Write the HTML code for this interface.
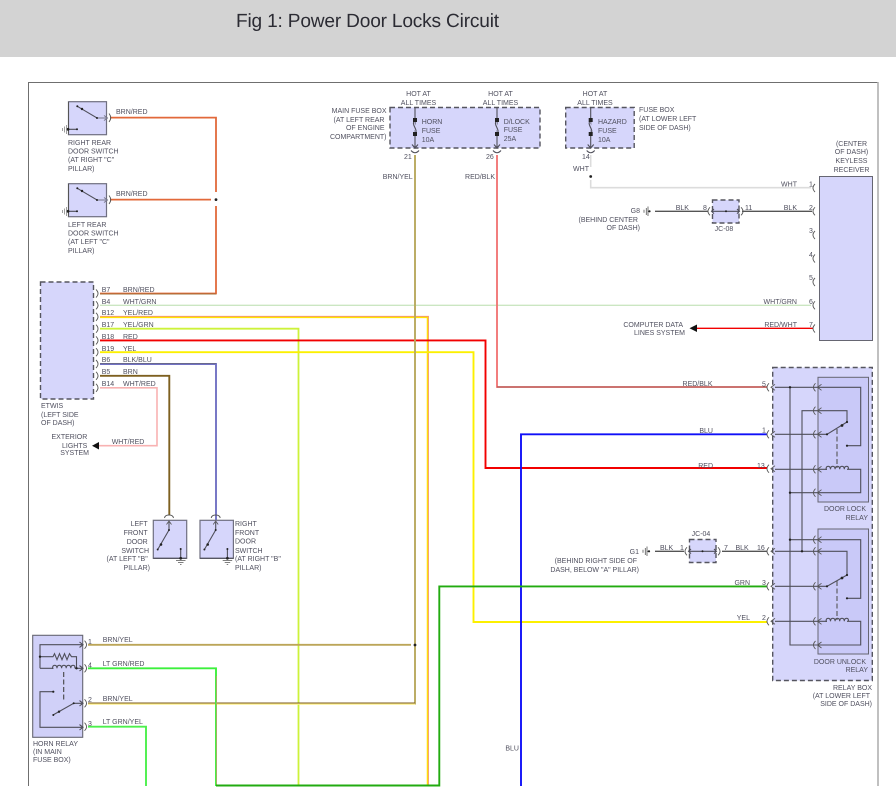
<!DOCTYPE html>
<html><head><meta charset="utf-8"><title>Fig 1: Power Door Locks Circuit</title>
<style>
html,body{margin:0;padding:0;background:#fff;width:896px;height:810px;overflow:hidden}
#h{position:absolute;left:0;top:0;width:896px;height:57px;background:#d3d3d3}
#h h1{position:absolute;left:236px;top:10px;margin:0;font:400 19.1px/24px "Liberation Sans",sans-serif;color:#2b2b33;white-space:nowrap;text-rendering:geometricPrecision;letter-spacing:-.18px}
svg{position:absolute;left:0;top:0}
text{font:7px "Liberation Sans",sans-serif;fill:#50505f}
.e{text-anchor:end}.m{text-anchor:middle}
.w{fill:none;stroke-linejoin:miter}
.k{fill:none;stroke:#4f4f5a;stroke-width:1.1}
.d{fill:#d6d6fb;stroke:#55555f;stroke-width:1.4;stroke-dasharray:5 3}
.s{fill:#d6d6fb;stroke:#6f6f80;stroke-width:1.2}
.i{fill:#c9c9f8;stroke:#666672;stroke-width:1}
.t{fill:#222}
</style></head><body>
<div id="h"><h1>Fig 1: Power Door Locks Circuit</h1></div>
<svg width="896" height="810" viewBox="0 0 896 810" xmlns="http://www.w3.org/2000/svg">
<defs>
<g id="cr"><path d="M-1,-4Q3,0-1,4" fill="none" stroke="#555" stroke-width=".9"/><path d="M-7,-3L-3,0L-7,3" fill="none" stroke="#555" stroke-width=".9"/></g>
<g id="cl"><path d="M1,-4Q-3,0 1,4" fill="none" stroke="#555" stroke-width=".9"/><path d="M7,-3L3,0L7,3" fill="none" stroke="#555" stroke-width=".9"/></g>
<g id="cn"><path d="M-1,-4Q3,0-1,4" fill="none" stroke="#555" stroke-width=".9"/></g>
<g id="cm"><path d="M1,-4Q-3,0 1,4" fill="none" stroke="#555" stroke-width=".9"/></g>
<g id="rsw">
<rect x="68.5" y="101.7" width="38" height="33" class="s"/>
<path d="M68.5,102V134.5" stroke="#555" fill="none"/>
<path d="M77.3,106.3L97,118H103M68,129.3H77" class="k"/>
<path d="M97,118H107M104,115.5L107.5,118L104,120.5" fill="none" stroke="#77778a"/>
<circle cx="77.3" cy="106.3" r="1" class="t"/><circle cx="82" cy="109" r="1.2" class="t"/><circle cx="97" cy="118" r="1" class="t"/><circle cx="68" cy="129.3" r="1.4" class="t"/><circle cx="77" cy="129.3" r="1" class="t"/>
<path d="M62.5,128V131M64.5,126.5V132.5M66.5,125V134" stroke="#777" stroke-width=".7" fill="none"/>
<path d="M109,113.5Q112.5,117.7 109,122" fill="none" stroke="#555" stroke-width=".9"/>
</g>
<g id="dsw">
<rect x="153.3" y="520.3" width="33.4" height="38" class="s"/>
<path d="M169,522V530L157.7,549.5M153.3,558.3H186.7M180.7,549V558" class="k"/>
<path d="M166.5,524.5L169,521L171.5,524.5" fill="none" stroke="#555" stroke-width=".8"/>
<path d="M164.5,518Q165,515 169,515T173.5,518" fill="none" stroke="#555" stroke-width=".9"/>
<circle cx="169" cy="530" r="1" class="t"/><circle cx="161" cy="544.5" r="1.3" class="t"/><circle cx="157.7" cy="549.5" r="1" class="t"/><circle cx="180.7" cy="549" r="1" class="t"/><circle cx="180.7" cy="558.3" r="1.4" class="t"/>
<path d="M176,560.5H185.5M178,562.5H183.5M180,564.5H181.5" stroke="#555" stroke-width=".8" fill="none"/>
</g>
<g id="fuse">
<path d="M0,107V148" class="k" stroke-width="1.2"/>
<path d="M0,120C-6,124 5,129 0,134" fill="none" stroke="#d6d6fb" stroke-width="3"/>
<path d="M0,120C-5,125 4,129 0,134" class="k"/>
<rect x="-2" y="118" width="4" height="4" class="t"/><rect x="-2" y="132" width="4" height="4" class="t"/>
<path d="M-3,144.5L0,148L3,144.5" class="k"/>
<path d="M-4,150.5Q0,155 4,150.5" class="k"/>
</g>
<g id="coil"><path d="M0,0H-1q0,-3 2.2,-3t2.3,3q0,-3 2.3,-3t2.3,3q0,-3 2.3,-3t2.3,3q0,-3 2.3,-3t2.3,3q0,-3 2.3,-3t1.7,3" class="k"/></g>
</defs>

<!-- frame -->
<path d="M28.5,786V82.5H878" fill="none" stroke="#6f6f6f" stroke-width="1"/>
<path d="M878,82V786" stroke="#b0b0b0" stroke-width="1.6" fill="none"/>

<!-- wires -->
<path d="M110,117.6H216V192M216,206V293.5H100M110,199.6H211" class="w" stroke="#e2693a" stroke-width="1.8"/>
<path d="M100,294H216" stroke="#8a6a30" stroke-width=".8"/>
<path d="M100,305.3H811" class="w" stroke="#cbe6c2" stroke-width="1.4"/>
<path d="M100,317.2H427.7V786" class="w" stroke="#ffe600" stroke-width="1.9"/>
<path d="M100,316.4H428.4V786" class="w" stroke="#f59a6a" stroke-width="1"/>
<path d="M100,328.7H298.5V786" class="w" stroke="#cdf23a" stroke-width="1.8"/>
<path d="M100,340.4H485.5V468H767" class="w" stroke="#f20000" stroke-width="1.9"/>
<path d="M100,352.2H473.5V622H767" class="w" stroke="#fcf000" stroke-width="1.9"/>
<path d="M100,364H216V520" class="w" stroke="#7272c4" stroke-width="1.9"/>
<path d="M100,363.6H216" stroke="#66667a" stroke-width=".8"/>
<path d="M100,375.8H169.3V515" class="w" stroke="#7e6020" stroke-width="1.9"/>
<path d="M100,387.8H157V445.7H99" class="w" stroke="#f8b2b2" stroke-width="1.6"/>
<path d="M415,155V703.5H88" class="w" stroke="#b9a95e" stroke-width="1.9"/>
<path d="M88,703.8H415" stroke="#fdf18a" stroke-width="1.8"/>
<path d="M88,703H415" stroke="#7a5a20" stroke-width="1"/>
<path d="M88,644.8H411" stroke="#bca558" stroke-width="1.9"/>
<path d="M88,668.3H216V786" class="w" stroke="#3cf03c" stroke-width="1.9"/>
<path d="M216.6,676V786" stroke="#b7a26a" stroke-width=".8"/>
<path d="M88,726.7H146V786" class="w" stroke="#4cf04c" stroke-width="1.9"/>
<path d="M497,155V387H767" class="w" stroke="#f07070" stroke-width="1.8"/>
<path d="M497,387H767" stroke="#8a4a40" stroke-width=".8"/>
<path d="M767,434.3H521V786" class="w" stroke="#1010f8" stroke-width="1.9"/>
<path d="M767,586.4H439.3V785.5H216" class="w" stroke="#22ab10" stroke-width="1.9"/>
<path d="M590.7,155V167M590.7,180V187.7H811" class="w" stroke="#dcdcdc" stroke-width="1.6"/>
<path d="M697,328.3H813" stroke="#f20000" stroke-width="1.3"/>
<path d="M655,211.3H708M742,211.3H812M655,551.3H684M722,551.3H767" stroke="#555" stroke-width="1.3" fill="none"/>
<path d="M99,442L92,445.7L99,449.5Z" fill="#111"/>
<path d="M697,324.5L689.5,328.3L697,332Z" fill="#111"/>
<circle cx="216" cy="199.6" r="1.4" class="t"/><circle cx="415" cy="645" r="1.4" class="t"/><circle cx="590.7" cy="176.5" r="1.4" class="t"/>

<!-- rear switches -->
<use href="#rsw"/><use href="#rsw" y="82"/>
<text x="116" y="114">BRN/RED</text><text x="116" y="196">BRN/RED</text>
<text x="68" y="145">RIGHT REAR</text><text x="68" y="153.5">DOOR SWITCH</text><text x="68" y="162">(AT RIGHT "C"</text><text x="68" y="171">PILLAR)</text>
<text x="68" y="227">LEFT REAR</text><text x="68" y="235.5">DOOR SWITCH</text><text x="68" y="244">(AT LEFT "C"</text><text x="68" y="253">PILLAR)</text>

<!-- fuse boxes -->
<rect x="390" y="107.5" width="150" height="40.5" class="d"/>
<rect x="565.7" y="107.5" width="68.5" height="40.5" class="d"/>
<use href="#fuse" x="415"/><use href="#fuse" x="497"/><use href="#fuse" x="590.7"/>
<text class="m" x="418.5" y="96">HOT AT</text><text class="m" x="418.5" y="105">ALL TIMES</text>
<text class="m" x="500.5" y="96">HOT AT</text><text class="m" x="500.5" y="105">ALL TIMES</text>
<text class="m" x="595" y="96">HOT AT</text><text class="m" x="595" y="105">ALL TIMES</text>
<text class="e" x="386.5" y="113">MAIN FUSE BOX</text><text class="e" x="384.5" y="122">(AT LEFT REAR</text><text class="e" x="384.5" y="130">OF ENGINE</text><text class="e" x="386.5" y="139">COMPARTMENT)</text>
<text x="421.7" y="124">HORN</text><text x="421.7" y="133">FUSE</text><text x="421.7" y="142">10A</text>
<text x="503.7" y="124">D/LOCK</text><text x="503.7" y="132">FUSE</text><text x="503.7" y="141">25A</text>
<text x="598" y="124">HAZARD</text><text x="598" y="133">FUSE</text><text x="598" y="142">10A</text>
<text x="639" y="112">FUSE BOX</text><text x="639" y="121">(AT LOWER LEFT</text><text x="639" y="130">SIDE OF DASH)</text>
<text x="404" y="159">21</text><text x="486" y="159">26</text><text x="582" y="159">14</text>
<text class="e" x="412.7" y="179">BRN/YEL</text><text class="e" x="495" y="179">RED/BLK</text><text class="e" x="589" y="171">WHT</text>

<!-- keyless receiver -->
<rect x="819.5" y="176.5" width="53" height="164" fill="#d6d6fb" stroke="#666672" stroke-width="1"/>
<text class="m" x="851.5" y="146">(CENTER</text><text class="m" x="851.5" y="154">OF DASH)</text><text class="m" x="851.5" y="163">KEYLESS</text><text class="m" x="851.5" y="172">RECEIVER</text>
<use href="#cm" x="814" y="188"/><use href="#cm" x="814" y="211.3"/><use href="#cm" x="814" y="235"/><use href="#cm" x="814" y="258.5"/><use href="#cm" x="814" y="282"/><use href="#cm" x="814" y="305.3"/><use href="#cm" x="814" y="328.5"/>
<text x="809" y="186.5">1</text><text x="809" y="210">2</text><text x="809" y="233">3</text><text x="809" y="257">4</text><text x="809" y="280">5</text><text x="809" y="304">6</text><text x="809" y="327">7</text>
<text class="e" x="797" y="186.5">WHT</text><text class="e" x="797" y="210">BLK</text><text class="e" x="797" y="304">WHT/GRN</text><text class="e" x="797" y="327">RED/WHT</text>

<!-- JC-08 -->
<rect x="712.5" y="200" width="26.5" height="23" class="d"/>
<path d="M712,211.3H739M714,209L711.5,211.3L714,213.6M737,209L739.5,211.3L737,213.6" class="k"/><circle cx="726" cy="211.3" r="1" class="t"/>
<use href="#cm" x="709" y="211.3"/><use href="#cn" x="742" y="211.3"/>
<text x="675.7" y="210">BLK</text><text x="703" y="210">8</text><text x="745" y="210">11</text><text class="m" x="724" y="231">JC-08</text>
<text class="e" x="640" y="213">G8</text><text class="e" x="638" y="222">(BEHIND CENTER</text><text class="e" x="640" y="230">OF DASH)</text>
<path d="M644,209.8V212.8M646.3,208V215M648,206.5V216M648,211.3H650" stroke="#555" stroke-width=".8" fill="none"/><circle cx="649.5" cy="211.3" r="1.1" class="t"/>
<text class="e" x="683" y="327">COMPUTER DATA</text><text class="e" x="685" y="335">LINES SYSTEM</text>

<!-- ETWIS -->
<rect x="40.5" y="282" width="53" height="117" class="d"/>
<use href="#cn" x="97" y="293.5"/><use href="#cn" x="97" y="305.3"/><use href="#cn" x="97" y="316.8"/><use href="#cn" x="97" y="328.7"/><use href="#cn" x="97" y="340.4"/><use href="#cn" x="97" y="352.2"/><use href="#cn" x="97" y="364"/><use href="#cn" x="97" y="375.8"/><use href="#cn" x="97" y="387.8"/>
<text x="101.7" y="292">B7</text><text x="123" y="292">BRN/RED</text>
<text x="101.7" y="304">B4</text><text x="123" y="304">WHT/GRN</text>
<text x="101.7" y="315">B12</text><text x="123" y="315">YEL/RED</text>
<text x="101.7" y="327">B17</text><text x="123" y="327">YEL/GRN</text>
<text x="101.7" y="339">B18</text><text x="123" y="339">RED</text>
<text x="101.7" y="351">B19</text><text x="123" y="351">YEL</text>
<text x="101.7" y="362">B6</text><text x="123" y="362">BLK/BLU</text>
<text x="101.7" y="374">B5</text><text x="123" y="374">BRN</text>
<text x="101.7" y="386">B14</text><text x="123" y="386">WHT/RED</text>
<text x="41" y="408">ETWIS</text><text x="41" y="417">(LEFT SIDE</text><text x="41" y="425">OF DASH)</text>
<text class="e" x="87.3" y="439">EXTERIOR</text><text class="e" x="87.3" y="448">LIGHTS</text><text class="e" x="89" y="455">SYSTEM</text>
<text x="111.7" y="444">WHT/RED</text>

<!-- front door switches -->
<use href="#dsw"/><use href="#dsw" x="46.7"/>
<text class="e" x="147.7" y="526">LEFT</text><text class="e" x="147.7" y="535">FRONT</text><text class="e" x="147.7" y="544">DOOR</text><text class="e" x="149" y="553">SWITCH</text><text class="e" x="147.7" y="561">(AT LEFT "B"</text><text class="e" x="150" y="570">PILLAR)</text>
<text x="235" y="526">RIGHT</text><text x="235" y="535">FRONT</text><text x="235" y="543.5">DOOR</text><text x="235" y="553">SWITCH</text><text x="235" y="561">(AT RIGHT "B"</text><text x="235" y="570">PILLAR)</text>

<!-- horn relay -->
<rect x="32.7" y="635.3" width="50" height="102" fill="#d0d0f8" stroke="#666672" stroke-width="1.1"/>
<path d="M40,668.3V644.7H82M40,656.7H53l1.5,-3 2.5,6 2.5,-6 2.5,6 2.5,-6 2.5,6 2.5,-6 2,3H76.5V668.3M40,668.3H53M75,668.3H82M53.5,691.7H40V727.3H82M53,715L73.7,703.3H82" class="k"/>
<use href="#coil" x="53.5" y="668.3"/>
<path d="M63.7,672V702" stroke="#444" stroke-width="1.1" stroke-dasharray="5 2.5" fill="none"/>
<path d="M79.5,642L83,644.7L79.5,647.4M79.5,665.6L83,668.3L79.5,671M79.5,700.6L83,703.3L79.5,706M79.5,724.6L83,727.3L79.5,730" class="k"/>
<circle cx="40" cy="656.7" r="1.2" class="t"/><circle cx="76.5" cy="668.3" r="1.2" class="t"/><circle cx="53.3" cy="691.7" r="1.1" class="t"/><circle cx="53.3" cy="715" r="1" class="t"/><circle cx="59" cy="711.7" r="1.2" class="t"/><circle cx="73.7" cy="703.3" r="1" class="t"/>
<use href="#cn" x="85.5" y="644.7"/><use href="#cn" x="85.5" y="668.3"/><use href="#cn" x="85.5" y="703.3"/><use href="#cn" x="85.5" y="726.7"/>
<text x="88" y="644">1</text><text x="88" y="667.5">4</text><text x="88" y="702">2</text><text x="88" y="726">3</text>
<text x="102.7" y="642">BRN/YEL</text><text x="102.7" y="666">LT GRN/RED</text><text x="102.7" y="701">BRN/YEL</text><text x="102.7" y="724">LT GRN/YEL</text>
<text x="33" y="746">HORN RELAY</text><text x="33" y="754">(IN MAIN</text><text x="33" y="762">FUSE BOX)</text>

<!-- relay box -->
<rect x="772.7" y="367.5" width="99.6" height="313" class="d" stroke-width="1.3"/>
<rect x="818" y="377.3" width="50.5" height="124.7" class="i"/>
<rect x="818" y="529" width="50.5" height="125" class="i"/>
<g>
<path d="M775,387.3H860.7V445.7H847M802,551.3V410.7H847V422M775,434.3H827L847,422M775,469.3H827M847,469.3H860.7V492.7H790M790,387.3V645H817" class="k"/>
<use href="#coil" x="827" y="469.3"/>
<path d="M837,429V468" stroke="#555" stroke-width="1.1" stroke-dasharray="5 2.5" fill="none"/>
<path d="M790,539.7H860.7V598.3H847M775,551.3H847V575M775,586.3H827L847,575M775,621.3H827M847,621.3H860.7V645H817" class="k"/>
<use href="#coil" x="827" y="621.3"/>
<path d="M837,581V620" stroke="#555" stroke-width="1.1" stroke-dasharray="5 2.5" fill="none"/>
<circle cx="790" cy="387.3" r="1.2" class="t"/><circle cx="790" cy="492.7" r="1.2" class="t"/><circle cx="790" cy="539.7" r="1.2" class="t"/><circle cx="802" cy="551.3" r="1.2" class="t"/>
<circle cx="847" cy="422" r="1.1" class="t"/><circle cx="847" cy="445.7" r="1.1" class="t"/><circle cx="827" cy="434.3" r="1.1" class="t"/><circle cx="842" cy="425.5" r="1.4" class="t"/>
<circle cx="847" cy="575" r="1.1" class="t"/><circle cx="847" cy="598.3" r="1.1" class="t"/><circle cx="827" cy="586.3" r="1.1" class="t"/><circle cx="842" cy="578" r="1.4" class="t"/>
</g>
<use href="#cl" x="768" y="387.3"/><use href="#cl" x="768" y="434.3"/><use href="#cl" x="768" y="468.7"/><use href="#cl" x="768" y="551.3"/><use href="#cl" x="768" y="586.3"/><use href="#cl" x="768" y="621.3"/>
<use href="#cl" x="814.5" y="387.3"/><use href="#cl" x="814.5" y="410.7"/><use href="#cl" x="814.5" y="434.3"/><use href="#cl" x="814.5" y="469.3"/><use href="#cl" x="814.5" y="492.7"/>
<use href="#cl" x="814.5" y="539.7"/><use href="#cl" x="814.5" y="551.3"/><use href="#cl" x="814.5" y="586.3"/><use href="#cl" x="814.5" y="621.3"/><use href="#cl" x="814.5" y="645"/>
<text x="762" y="386.5">5</text><text x="762" y="432.5">1</text><text x="757" y="468">13</text><text x="757" y="550">16</text><text x="762" y="585">3</text><text x="762" y="620">2</text>
<text class="e" x="712.5" y="386">RED/BLK</text><text class="e" x="713" y="433">BLU</text><text class="e" x="713" y="468">RED</text><text class="e" x="750" y="585">GRN</text><text class="e" x="750" y="620">YEL</text>
<text class="e" x="519" y="750.5">BLU</text>
<text class="e" x="866" y="511">DOOR LOCK</text><text class="e" x="868" y="520">RELAY</text>
<text class="e" x="866" y="664">DOOR UNLOCK</text><text class="e" x="868" y="672">RELAY</text>
<text class="e" x="872" y="690">RELAY BOX</text><text class="e" x="870" y="698">(AT LOWER LEFT</text><text class="e" x="872" y="706">SIDE OF DASH)</text>

<!-- JC-04 / G1 -->
<rect x="689.5" y="539.5" width="26.5" height="23" class="d"/>
<path d="M689,551.3H716M691,549L688.5,551.3L691,553.6M714,549L716.5,551.3L714,553.6" class="k"/><circle cx="702.5" cy="551.3" r="1" class="t"/>
<use href="#cm" x="686" y="551.3"/><use href="#cn" x="719" y="551.3"/>
<text x="660" y="550">BLK</text><text x="680" y="550">1</text><text x="724" y="550">7</text><text x="735.5" y="550">BLK</text><text class="m" x="701" y="536">JC-04</text>
<text class="e" x="639" y="554">G1</text><text class="e" x="637" y="563">(BEHIND RIGHT SIDE OF</text><text class="e" x="639" y="572">DASH, BELOW "A" PILLAR)</text>
<path d="M643,549.8V552.8M645.3,548V555M647,546.5V556M647,551.3H649" stroke="#555" stroke-width=".8" fill="none"/><circle cx="649" cy="551.3" r="1.1" class="t"/>
</svg>
</body></html>
